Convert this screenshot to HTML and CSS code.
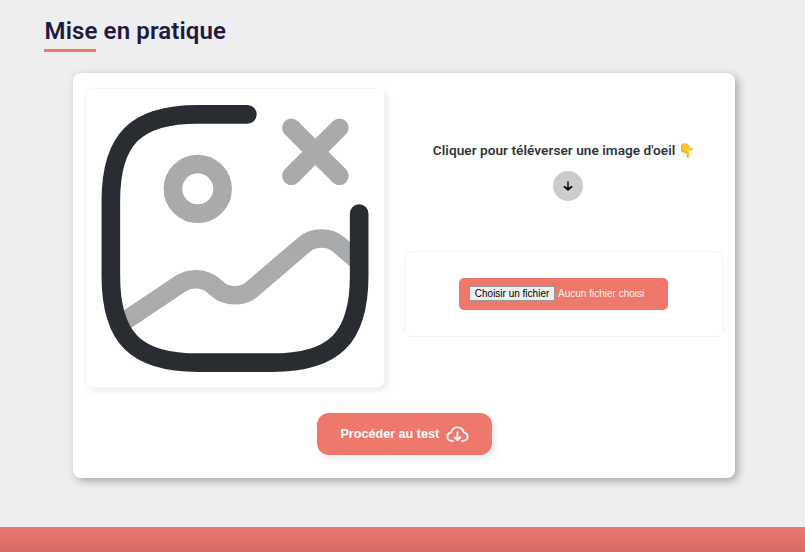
FILE: index.html
```html
<!DOCTYPE html>
<html lang="fr">
<head>
<meta charset="utf-8">
<title>Mise en pratique</title>
<link rel="stylesheet" href="styles.css">
</head>
<body>
<main>
  <h2 class="title"><span>Mise en pratique</span></h2>
  <section class="card">
    <div class="columns">
      <div class="preview">
        <svg viewBox="0 0 24 24" fill="none" stroke="#292d32" stroke-width="1.5" stroke-linecap="round" stroke-linejoin="round">
          <g opacity=".4">
            <path d="M9 10C10.1 10 11 9.1 11 8S10.1 6 9 6 7 6.9 7 8s.9 2 2 2Z"/>
            <path d="M16.54 3.08 20.41 6.95M20.41 3.08 16.54 6.95"/>
            <path d="M2.67 18.95 7.6 15.64C8.39 15.11 9.53 15.17 10.24 15.78L10.57 16.07C11.35 16.74 12.61 16.74 13.39 16.07L17.55 12.5C18.33 11.83 19.59 11.83 20.37 12.5L21.8 13.73"/>
          </g>
          <path d="M13 2H9C4 2 2 4 2 9V15C2 20 4 22 9 22H15C20 22 22 20 22 15V10"/>
        </svg>
      </div>
      <div class="upload">
        <h3 class="prompt">Cliquer pour téléverser une image d'oeil <span class="emoji">👇</span></h3>
        <div class="arrow">
          <svg viewBox="0 0 12 12" fill="none" stroke="#000" stroke-width="1.4"><path d="M6 1.500V10M1.800 6.200 6 10 10.200 6.200"/><path d="M2.200 6.200 6 7.500 9.800 6.200 6 10Z" fill="#000" stroke="none"/></svg>
        </div>
        <div class="dropzone">
          <label class="file"><span class="choose">Choisir un fichier</span><span class="status">Aucun fichier choisi</span></label>
        </div>
      </div>
    </div>
    <button class="submit">Procéder au test
      <svg viewBox="0 0 24 18" fill="none" stroke="#fff" stroke-width="2" stroke-linecap="round" stroke-linejoin="round"><path d="M7.2 15.8H6C3.2 15.8 1.3 13.8 1.3 11.4 1.3 9 3 7.2 5.3 7 6 3.6 8.6 1.4 12 1.4S18 3.6 18.7 7c2.3.2 4 2 4 4.4 0 2.4-1.9 4.400-4.7 4.400h-1.200"/><path d="M12 6.500v8.200M9 12l3 3 3-3"/></svg>
    </button>
  </section>
</main>
<footer class="footer"></footer>
</body>
</html>
```
FILE: styles.css
```css
* { box-sizing: border-box; }
body {
  margin: 0;
  height: 552px;
  overflow: hidden;
  display: flex;
  flex-direction: column;
  background: #eee;
  font-family: "Liberation Sans", Arial, sans-serif;
}
main { height: 526.5px; padding: 16px 70px 0 43.5px; }
.title {
  margin: 0;
  height: 36px;
  font: 600 24px/30px Roboto, sans-serif;
  letter-spacing: .13px;
  color: #1f1a40;
}
.title span { padding-left: 1px; }
.title::after {
  content: "";
  display: block;
  width: 52.5px;
  height: 3px;
  margin-top: 3px;
  background: #ee786c;
}
.card {
  width: 662px;
  height: 404.5px;
  margin: 21.2px 0 0 29.8px;
  padding: 15px 11px 0 12px;
  background: #fff;
  border-radius: 8px;
  box-shadow: 3px 3px 8px rgba(0, 0, 0, .3);
}
.columns { display: flex; gap: 19px; height: 300px; }
.preview {
  width: 300px;
  height: 300px;
  border: 1px solid #f5f5f5;
  border-radius: 8px;
  box-shadow: 3px 3px 6px rgba(0, 0, 0, .08);
}
.preview svg { display: block; width: 298px; height: 299px; }
.upload { width: 320px; display: flex; flex-direction: column; align-items: center; padding-top: 52px; }
.prompt {
  margin: 0;
  font: 600 13.6px/20px Roboto, sans-serif;
  letter-spacing: .05px;
  color: #30343c;
  white-space: nowrap;
}
.emoji { font-family: "Noto Color Emoji", sans-serif; }
.arrow {
  display: grid;
  place-items: center;
  width: 30px;
  height: 30px;
  margin: 10.5px 0 50px 8px;
  border-radius: 50%;
  background: #ccc;
}
.arrow svg { width: 12px; height: 12px; }
.dropzone {
  display: grid;
  place-items: center;
  width: 320px;
  height: 86px;
  padding-right: 1.5px;
  border: 1px solid #f3f3f3;
  border-radius: 8px;
}
.file {
  display: flex;
  align-items: center;
  gap: 3px;
  width: 209px;
  height: 32px;
  padding-left: 10px;
  border-radius: 5px;
  background: #ee786c;
  font-size: 10px;
  color: #fff;
}
.choose {
  width: 86px;
  height: 15px;
  border: 1px solid #999;
  background: #efefef;
  color: #000;
  line-height: 13px;
  text-align: center;
  white-space: nowrap;
}
.status { white-space: nowrap; opacity: .9; }
.submit {
  display: flex;
  align-items: center;
  justify-content: center;
  gap: 7px;
  width: 175px;
  height: 42px;
  margin: 25.3px 0 0 232px;
  padding: 0;
  border: 0;
  border-radius: 12px;
  background: #ee786c;
  box-shadow: 3px 3px 6px rgba(0, 0, 0, .09);
  font: bold 12.6px "Liberation Sans", sans-serif;
  color: #fff;
}
.submit svg { width: 23px; height: 17px; }
.footer { flex: 1; background: linear-gradient(#ee786c, #d56a63); }
```
